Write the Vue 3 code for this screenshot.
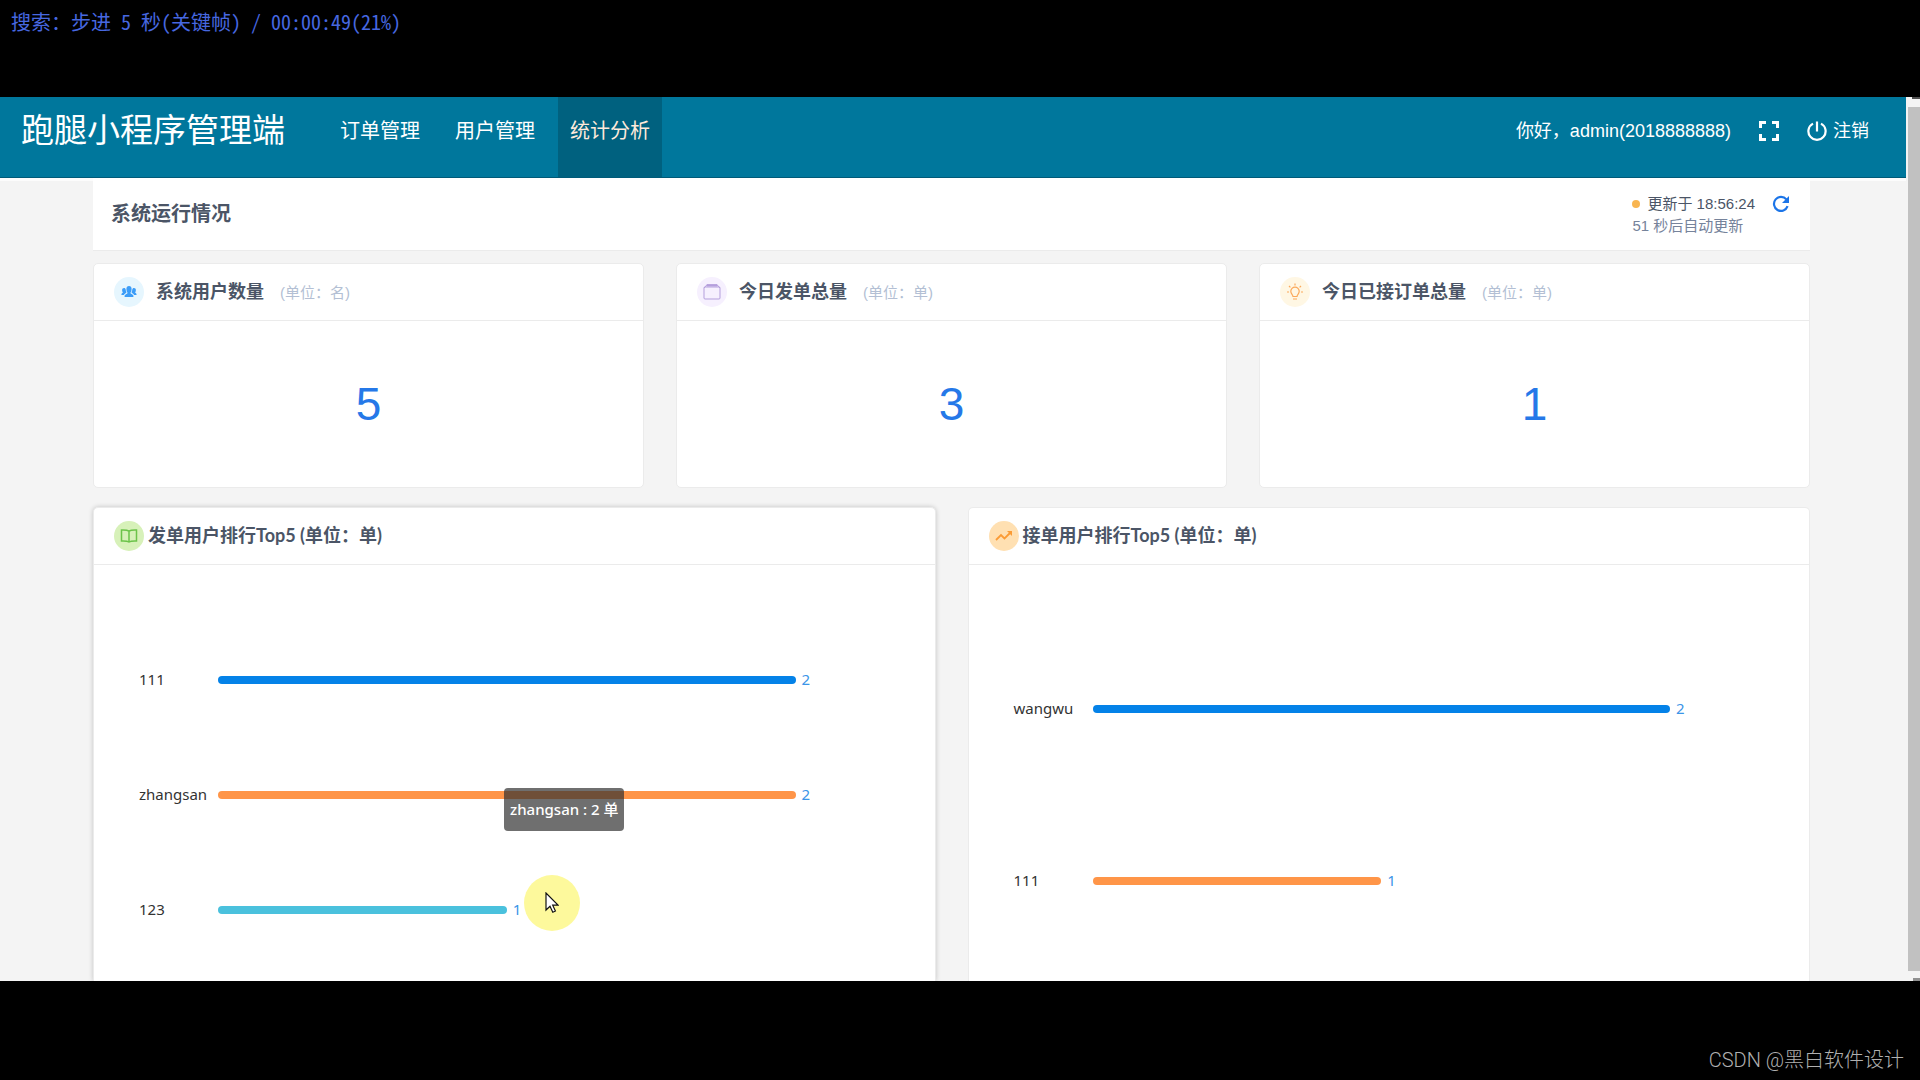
<script setup>
const navItems = [
  { label: '订单管理', active: false },
  { label: '用户管理', active: false },
  { label: '统计分析', active: true },
]

const stats = [
  { icon: 'users', title: '系统用户数量', unit: '(单位：名)', value: 5 },
  { icon: 'box', title: '今日发单总量', unit: '(单位：单)', value: 3 },
  { icon: 'bulb', title: '今日已接订单总量', unit: '(单位：单)', value: 1 },
]

const colors = ['#0482e8', '#ff9548', '#4ac1dd']

const rankings = [
  {
    icon: 'book',
    title: '发单用户排行Top5 (单位：单)',
    hovered: true,
    rows: [
      { name: '111', value: 2 },
      { name: 'zhangsan', value: 2, tooltip: true },
      { name: '123', value: 1 },
    ],
  },
  {
    icon: 'trend',
    title: '接单用户排行Top5 (单位：单)',
    hovered: false,
    rows: [
      { name: 'wangwu', value: 2 },
      { name: '111', value: 1 },
    ],
  },
]

const barWidth = (rows, value) =>
  `${(value / Math.max(...rows.map((row) => row.value))) * 100}%`
</script>

<template>
  <div class="player">
    <div class="osd">搜索：步进 5 秒(关键帧) / 00:00:49(21%)</div>

    <div class="screen">
      <div class="app">
        <header class="topbar">
          <h1 class="brand">跑腿小程序管理端</h1>
          <nav class="nav">
            <a
              v-for="item in navItems"
              :key="item.label"
              href="#"
              class="nav-link"
              :class="{ active: item.active }"
            >{{ item.label }}</a>
          </nav>
          <div class="account">
            <span class="greeting">你好，admin(2018888888)</span>
            <button class="icon-button" type="button" aria-label="全屏">
              <svg width="20" height="20" viewBox="0 0 20 20" fill="none" stroke="currentColor" stroke-width="3">
                <path d="M1.5 7V1.5H7M13 1.5h5.500V7M18.500 13v5.500H13M7 18.500H1.500V13" />
              </svg>
            </button>
            <a href="#" class="logout">
              <svg width="20" height="20" viewBox="0 0 20 20" fill="none" stroke="currentColor" stroke-width="2.200">
                <path d="M10 0.500V10.500M6 2.600A8.600 8.600 0 1 0 14 2.600" />
              </svg>
              注销
            </a>
          </div>
        </header>

        <main class="content">
          <section class="status">
            <h2 class="status-title">系统运行情况</h2>
            <div class="update">
              <div class="update-line">
                <span class="dot"></span>
                <span>更新于 18:56:24</span>
                <button class="refresh" type="button" aria-label="刷新">
                  <svg width="18" height="18" viewBox="0 0 18 18">
                    <path d="M15.600 11.200A7 7 0 1 1 14.400 4.400" fill="none" stroke="currentColor" stroke-width="2.200" />
                    <path d="M17 1v7h-7z" fill="currentColor" />
                  </svg>
                </button>
              </div>
              <div class="countdown">51 秒后自动更新</div>
            </div>
          </section>

          <section class="stats">
            <article v-for="stat in stats" :key="stat.title" class="card">
              <header class="card-head stat-head">
                <span class="badge" :class="stat.icon">
                  <svg v-if="stat.icon === 'users'" width="16" height="16" viewBox="0 0 16 16" fill="currentColor">
                    <path d="M8 2c1.700 0 2.600 1.200 2.600 3S9.800 8.400 9.400 9c0 .8 2.400 1 3 2.600V13H3.600v-1.400C4.200 10 6.600 9.800 6.600 9 6.200 8.400 5.400 6.800 5.400 5S6.300 2 8 2z" />
                    <path d="M3 4c1 0 1.600.6 1.700 1.600.1 1.200.3 1.900.8 2.600C5 9.400 3.400 9.600 2.800 11H.4c0-1.400.9-1.900 1.500-2.400-.5-.7-.8-1.600-.8-2.600C1.100 4.700 1.900 4 3 4zM13 4c-1 0-1.600.6-1.700 1.600-.1 1.200-.3 1.900-.8 2.600.5 1.200 2.100 1.400 2.700 2.800h2.400c0-1.400-.9-1.900-1.500-2.400.5-.7.8-1.600.8-2.600C14.900 4.700 14.100 4 13 4z" />
                  </svg>
                  <svg v-else-if="stat.icon === 'box'" width="18" height="18" viewBox="0 0 18 18" fill="none" stroke="currentColor">
                    <rect x="1" y="4" width="16" height="12" rx="1" />
                    <path d="M1 5L4 1.700h10L17 5" />
                    <path d="M3.500 2.500h11" stroke-width="2" />
                  </svg>
                  <svg v-else width="18" height="18" viewBox="0 0 18 18" fill="none" stroke="currentColor" stroke-width="1.200">
                    <path d="M7 13.500c0-2-2.200-2.600-2.200-5.200a4.200 4.200 0 0 1 8.400 0c0 2.600-2.200 3.200-2.200 5.200zM7 16h4M9 .500v2M1 9h2M15 9h2M3 3l1.400 1.400M15 3l-1.400 1.400" />
                  </svg>
                </span>
                <h3 class="card-title">{{ stat.title }}</h3>
                <span class="unit">{{ stat.unit }}</span>
              </header>
              <p class="number">{{ stat.value }}</p>
            </article>
          </section>

          <section class="rankings">
            <article
              v-for="ranking in rankings"
              :key="ranking.title"
              class="card ranking"
              :class="{ hovered: ranking.hovered }"
            >
              <header class="card-head">
                <span class="badge" :class="ranking.icon">
                  <svg v-if="ranking.icon === 'book'" width="18" height="16" viewBox="0 0 18 16" fill="none" stroke="currentColor" stroke-width="1.500">
                    <path d="M9 3.200C7.500 2 4 1.900 1.500 2v11C4 12.900 7.500 13 9 14c1.500-1 5-1.100 7.500-1V2C14 1.900 10.500 2 9 3.200zM9 3.200V14" />
                  </svg>
                  <svg v-else width="18" height="16" viewBox="0 0 18 16">
                    <path d="M1 12l5-5 3.500 3.500L15 5" fill="none" stroke="currentColor" stroke-width="1.800" />
                    <path d="M12 3h5v5z" fill="currentColor" />
                  </svg>
                </span>
                <h3 class="card-title">{{ ranking.title }}</h3>
              </header>
              <ul class="plot">
                <li v-for="(row, index) in ranking.rows" :key="row.name" class="plot-row">
                  <span class="name">{{ row.name }}</span>
                  <div class="track">
                    <div
                      class="bar"
                      :style="{ width: barWidth(ranking.rows, row.value), background: colors[index] }"
                    ></div>
                    <span class="value">{{ row.value }}</span>
                    <div v-if="row.tooltip" class="tooltip">{{ row.name }} : {{ row.value }} 单</div>
                  </div>
                </li>
              </ul>
              <div v-if="ranking.hovered" class="pointer" aria-hidden="true">
                <svg width="14" height="22" viewBox="0 0 14 22" fill="#fff" stroke="#111" stroke-width="1.200">
                  <path d="M1 1v17l4-3.800 2.800 6 2.600-1.200-2.700-5.800H13z" />
                </svg>
              </div>
            </article>
          </section>
        </main>
      </div>

      <div class="scrollbar" aria-hidden="true">
        <div class="scroll-end scroll-up"></div>
        <div class="thumb"></div>
        <div class="scroll-end scroll-down"></div>
      </div>
    </div>

    <footer class="watermark">CSDN @黑白软件设计</footer>
  </div>
</template>

<style>
body {
  margin: 0;
  background: #000;
}
</style>

<style scoped>
.player {
  display: flex;
  flex-direction: column;
  min-height: 100vh;
  background: #000;
  color: #4b5566;
  font-family: "Liberation Sans", "Noto Sans CJK SC", sans-serif;
}

h1, h2, h3, p, ul {
  margin: 0;
  padding: 0;
}

button {
  display: flex;
  padding: 0;
  border: 0;
  background: none;
  color: inherit;
}

a {
  color: inherit;
  text-decoration: none;
}

svg {
  flex: none;
}

.osd {
  box-sizing: border-box;
  height: 97px;
  padding: 8px 11px;
  color: #4768e0;
  font-family: "Noto Sans Mono CJK SC", "Noto Sans CJK SC", monospace;
  font-size: 20px;
  font-weight: 300;
  line-height: 28px;
}

.screen {
  display: flex;
  flex: 1;
  overflow: hidden;
  background: #f4f4f4;
}

.app {
  display: flex;
  flex: 1;
  flex-direction: column;
  min-width: 0;
}

.topbar {
  display: flex;
  align-items: flex-start;
  height: 80px;
  padding: 0 37px 0 21px;
  border-bottom: 1px solid #005a78;
  background: #00779c;
  box-shadow: 0 3px 0 #fcfcfc;
  color: #fff;
  line-height: 68px;
}

.brand {
  margin-right: 43px;
  font-size: 33px;
  font-weight: 400;
}

.nav {
  display: flex;
  flex: 1;
  align-self: stretch;
  gap: 11px;
}

.nav-link {
  padding: 0 12px;
  font-size: 20px;
}

.nav-link.active {
  background: #00617f;
  color: #ffeadb;
}

.account {
  display: flex;
  align-items: center;
  gap: 28px;
  font-size: 18px;
}

.logout {
  display: flex;
  align-items: center;
  gap: 6px;
}

.content {
  display: flex;
  flex: 1;
  flex-direction: column;
  padding: 0 96px 0 93px;
}

.status {
  display: flex;
  justify-content: space-between;
  height: 72px;
  padding: 0 20px 0 18px;
  border-bottom: 1px solid #ebebeb;
  background: #fff;
}

.status-title {
  font-size: 20px;
  line-height: 72px;
}

.update {
  padding-top: 15px;
  font-size: 15px;
  line-height: 22px;
}

.update-line {
  display: flex;
  align-items: center;
}

.dot {
  width: 8px;
  height: 8px;
  margin-right: 7px;
  border-radius: 50%;
  background: #f8b551;
}

.refresh {
  margin-left: 17px;
  color: #1c75e8;
}

.countdown {
  color: #76839b;
}

.stats {
  display: grid;
  grid-template-columns: repeat(3, 1fr);
  gap: 32px;
  margin-top: 12px;
}

.card {
  border: 1px solid #ebebeb;
  border-radius: 5px;
  background: #fff;
}

.card-head {
  display: flex;
  align-items: center;
  height: 56px;
  padding: 0 20px;
  border-bottom: 1px solid #ebebeb;
}

.card-title {
  margin-left: 4px;
  padding-bottom: 3px;
  font-family: Lato, "Noto Sans CJK SC", sans-serif;
  font-size: 18px;
  line-height: 24px;
}

.stat-head .card-title {
  margin-left: 12px;
}

.unit {
  margin-left: 16px;
  padding-bottom: 2px;
  color: #b3bfd4;
  font-size: 15px;
}

.badge {
  display: flex;
  align-items: center;
  justify-content: center;
  width: 30px;
  height: 30px;
  border-radius: 50%;
}

.users {
  background: #e6f6fe;
  color: #3c9df8;
}

.box {
  background: #f6f0fe;
  color: #b49fdc;
}

.bulb {
  background: #fff7e4;
  color: #fba95b;
}

.book {
  background: #d7f1b9;
  color: #6cc34a;
}

.trend {
  background: #ffe0b2;
  color: #fb9b35;
}

.number {
  color: #2578e8;
  font-size: 46px;
  line-height: 166px;
  text-align: center;
}

.rankings {
  display: grid;
  flex: 1;
  grid-template-columns: repeat(2, 1fr);
  gap: 32px;
  margin-top: 19px;
}

.ranking {
  position: relative;
  display: flex;
  flex-direction: column;
  border-bottom: 0;
  border-radius: 5px 5px 0 0;
}

.ranking.hovered {
  box-shadow: 0 0 5px rgba(0, 0, 0, 0.2);
}

.plot {
  display: flex;
  flex: 1;
  flex-direction: column;
  min-height: 344px;
  padding: 58px 139px 14px 45px;
  list-style: none;
}

.plot-row {
  display: flex;
  flex: 1;
  align-items: center;
  font-family: "Noto Sans", "Noto Sans CJK SC", sans-serif;
  font-size: 15px;
  line-height: 20px;
}

.name {
  width: 79px;
  padding-bottom: 2px;
  color: #333;
}

.track {
  position: relative;
  display: flex;
  flex: 1;
  align-items: center;
  min-width: 0;
}

.bar {
  flex: none;
  height: 8px;
  border-radius: 4px;
}

.value {
  flex: none;
  margin-left: 6px;
  padding-bottom: 2px;
  color: #3b95e8;
}

.tooltip {
  position: absolute;
  top: 4px;
  left: 286px;
  box-sizing: border-box;
  height: 43px;
  padding: 0 6px;
  border-radius: 4px;
  background: rgba(50, 50, 50, 0.7);
  color: #fff;
  font-weight: 500;
  line-height: 43px;
  white-space: nowrap;
}

.pointer {
  position: absolute;
  top: 367px;
  left: 430px;
  display: flex;
  align-items: center;
  justify-content: center;
  width: 56px;
  height: 56px;
  border-radius: 50%;
  background: #fdf99c;
}

.scrollbar {
  display: flex;
  flex-direction: column;
  width: 12px;
  padding-left: 2px;
  background: #f4f4f4;
}

.scroll-end {
  height: 10px;
}

.scroll-up {
  background: linear-gradient(#505050, #505050) 4px 0 / 8px 2px no-repeat;
}

.scroll-down {
  background: linear-gradient(#909090, #909090) 5px 100% / 7px 3px no-repeat;
}

.thumb {
  flex: 1;
  background: #c1c1c1;
}

.watermark {
  box-sizing: border-box;
  height: 99px;
  padding: 64px 16px 0;
  color: #b0b0b0;
  font-family: Roboto, "Noto Sans CJK SC", sans-serif;
  font-size: 20px;
  font-weight: 300;
  line-height: 30px;
  text-align: right;
}
</style>
